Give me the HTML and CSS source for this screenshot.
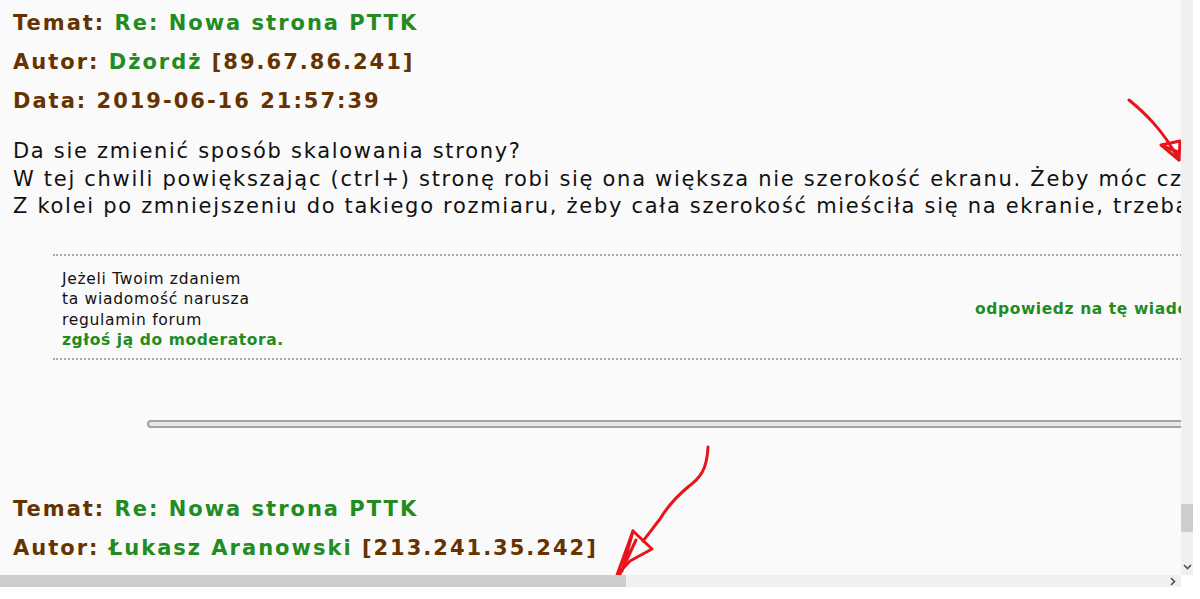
FILE: index.html
```html
<!DOCTYPE html>
<html lang="pl">
<head>
  <meta charset="UTF-8" />
  <meta name="viewport" content="width=device-width, initial-scale=1.0"/>
  <title>Re: Nowa strona PTTK | Forum</title>
  <link rel="stylesheet" href="styles.css">
</head>
<body>
  <div class="window">
    <div class="viewport">
      <div class="page">
        <div class="post">
          <div class="post-head">
            <div><span class="label">Temat:</span> <span class="value">Re: Nowa strona PTTK</span></div>
            <div><span class="label">Autor:</span> <span class="value">Dżordż</span> <span class="label">[89.67.86.241]</span></div>
            <div><span class="label">Data: 2019-06-16 21:57:39</span></div>
          </div>
          <div class="post-body">
            Da sie zmienić sposób skalowania strony?<br>
            W tej chwili powiększając (ctrl+) stronę robi się ona większa nie szerokość ekranu. Żeby móc czytać trzeba przewijać stronę w poziomie.<br>
            Z kolei po zmniejszeniu do takiego rozmiaru, żeby cała szerokość mieściła się na ekranie, trzeba mocno wytężać wzrok.
          </div>
          <div class="post-foot">
            <div class="report">
              Jeżeli Twoim zdaniem<br>
              ta wiadomość narusza<br>
              regulamin forum<br>
              <a href="#" class="link">zgłoś ją do moderatora.</a>
            </div>
            <div class="reply">
              <a href="#" class="link">odpowiedz na tę wiadomość</a>
            </div>
          </div>
          <div class="separator"></div>
        </div>

        <div class="post">
          <div class="post-head">
            <div><span class="label">Temat:</span> <span class="value">Re: Nowa strona PTTK</span></div>
            <div><span class="label">Autor:</span> <span class="value">Łukasz Aranowski</span> <span class="label">[213.241.35.242]</span></div>
          </div>
        </div>
      </div>

      <svg class="scribble" width="1181" height="575" viewBox="0 0 1181 575">
        <g fill="none" stroke="#e8141c" stroke-width="3" stroke-linecap="round" stroke-linejoin="round">
          <path d="M1129 100 C1145 113 1163 130 1179 160"/>
          <path d="M1179 160 L1161 145 L1180 141 Z"/>
          <path d="M1163 146 L1178 152 L1177 158"/>
          <path d="M708 447 C707 470 700 478 688 487 C676 497 666 509 660 519 C653 528 648 535 643 541"/>
          <path d="M617 575 L633 531 L652 549 L630 561 Z"/>
          <path d="M633 531 L622 571 M636 540 L620 574"/>
        </g>
      </svg>
    </div>

    <div class="vscroll">
      <div class="vthumb"></div>
      <svg class="chevron-down" width="9" height="6" viewBox="0 0 9 6">
        <path d="M1 1 L4.5 4.5 L8 1" fill="none" stroke="#505050" stroke-width="1.6"/>
      </svg>
    </div>
    <div class="hscroll">
      <div class="hthumb"></div>
      <svg class="chevron-right" width="6" height="9" viewBox="0 0 6 9">
        <path d="M1 1 L4.5 4.5 L1 8" fill="none" stroke="#505050" stroke-width="1.6"/>
      </svg>
    </div>
    <div class="corner"></div>
  </div>
</body>
</html>
```

FILE: styles.css
```css
body {
  margin: 0;
  background-color: #fff;
  font-family: 'DejaVu Sans', Verdana, sans-serif;
  color: #111;
}

.window {
  display: grid;
  grid-template-columns: 1181px 12px;
  grid-template-rows: 575px 12px;
}

.viewport {
  position: relative;
  overflow: hidden;
  background-color: #fafafa;
}

.page {
  width: 2000px;
  padding: 2px 0 0 13px;
}

.post-head {
  font-size: 21px;
  font-weight: bold;
  letter-spacing: 2px;
  line-height: 39px;
  margin-top: 2px;
}

.label {
  color: #663300;
}

.value {
  color: #228b22;
}

.post-body {
  margin-top: 17px;
  font-size: 21px;
  letter-spacing: 1.7px;
  line-height: 27.5px;
  white-space: nowrap;
}

.post-foot {
  margin: 33px 0 0 40px;
  border-top: 2px dotted #a8a8a8;
  border-bottom: 2px dotted #a8a8a8;
  padding: 13px 9px 7px;
  display: flex;
  align-items: center;
  font-size: 15.5px;
  letter-spacing: 0.7px;
  line-height: 20.6px;
}

.report {
  width: 913px;
}

.link {
  color: #228b22;
  font-weight: bold;
  letter-spacing: 0.6px;
  text-decoration: none;
}

.reply {
  white-space: nowrap;
}

.separator {
  margin: 60px 0 0 134px;
  height: 4px;
  border: 2px solid #a3a3a3;
  border-radius: 4px;
  background-color: #e6e6e6;
}

.post + .post {
  margin-top: 62px;
}

.scribble {
  position: absolute;
  left: 0;
  top: 0;
  pointer-events: none;
}

.vscroll {
  background-color: #f0f0f0;
  display: flex;
  flex-direction: column;
  align-items: center;
  padding-top: 504px;
}

.vthumb {
  width: 12px;
  height: 28px;
  background-color: #cdcdcd;
}

.chevron-down {
  margin-top: 32px;
}

.hscroll {
  background-color: #f0f0f0;
  display: flex;
  align-items: center;
}

.hthumb {
  width: 626px;
  height: 12px;
  background-color: #cdcdcd;
}

.chevron-right {
  margin-left: auto;
  margin-right: 5px;
}

.corner {
  background-color: #fff;
}
```
